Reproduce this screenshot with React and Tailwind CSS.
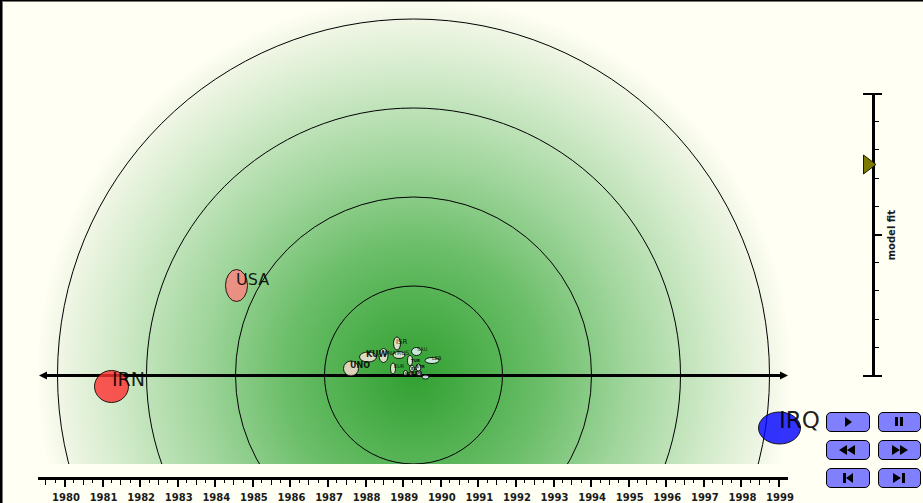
import { useState } from "react";

const RINGS = [89, 178, 267, 356];
const FIRST_YEAR = 1980;
const YEARS = Array.from({ length: 20 }, (_, i) => FIRST_YEAR + i);
const QUARTERS = Array.from({ length: 80 }, (_, i) => i - 2);

const yearX = (year) => 65 + (year - FIRST_YEAR) * 37.58;

const ACTORS = [
  { id: "iraq", label: "IRQ", cx: 779.5, cy: 428, rx: 21, ry: 16, fill: "#0000ff", size: 23, x: 779, y: 428 },
  { id: "iran", label: "IRN", cx: 111.5, cy: 386.5, rx: 17, ry: 16, fill: "#ff3030", size: 19, x: 112, y: 386 },
  { id: "usa", label: "USA", cx: 236.5, cy: 285.5, rx: 11, ry: 16, fill: "#ff8080", size: 16, x: 236, y: 285 },
  { id: "uno", label: "UNO", cx: 351, cy: 368.5, rx: 7.5, ry: 7.5, fill: "#ffdcd6", size: 8, bold: true, x: 350, y: 368 },
  { id: "kuwait", label: "KUW", cx: 368, cy: 357, rx: 8.5, ry: 5, fill: "#ffeae2", size: 8, bold: true, x: 366, y: 357 },
  { id: "una", label: "UNA", cx: 383.5, cy: 355.5, rx: 4.5, ry: 7, fill: "#fff0e8", size: 6, x: 383, y: 355 },
  { id: "israel", label: "ISR", cx: 397, cy: 343.5, rx: 3.5, ry: 6.5, fill: "#fff0e8", size: 7, x: 396, y: 344 },
  { id: "russia", label: "RUS", cx: 399, cy: 355, rx: 6, ry: 3.5, fill: "#fff4ee", size: 6, x: 397, y: 355 },
  { id: "europe", label: "EUR", cx: 393, cy: 368.5, rx: 2.5, ry: 5.5, fill: "#fff4ee", size: 5, x: 394, y: 368 },
  { id: "saudi", label: "SAU", cx: 416.5, cy: 351.5, rx: 5, ry: 4, fill: "#eafaff", size: 5, x: 417, y: 351 },
  { id: "lebanon", label: "LEB", cx: 432, cy: 360.5, rx: 7, ry: 3, fill: "#eafaff", size: 5, x: 432, y: 360 },
  { id: "turkey", label: "TUR", cx: 410, cy: 360.5, rx: 2.5, ry: 5, fill: "#fff4ee", size: 4, bold: true, x: 411, y: 362 },
  { id: "syria", label: "SYR", cx: 418.5, cy: 367.5, rx: 2.5, ry: 3.5, fill: "#ffffff", size: 4, bold: true, x: 416, y: 368 },
  { id: "egypt", label: "EGY", cx: 412, cy: 368.5, rx: 2.5, ry: 3, fill: "#ffffff", size: 4, bold: true, x: 411, y: 370 },
  { id: "jordan", label: "JOR", cx: 405.5, cy: 373, rx: 2, ry: 2.5, fill: "#ffffff", size: 4, bold: true, x: 405, y: 375 },
  { id: "france", label: "FRN", cx: 419, cy: 373, rx: 2.5, ry: 2.5, fill: "#ffffff", size: 4, bold: true, x: 412, y: 374 },
  { id: "britain", label: "UK", cx: 411, cy: 373.5, rx: 2, ry: 2, fill: "#ffffff", size: 4, bold: true, x: 411, y: 377 },
  { id: "china", label: "", cx: 425.5, cy: 377, rx: 3.5, ry: 2, fill: "#eafaff", size: 4, x: 425, y: 377 },
];

function ConflictMap() {
  return (
    <svg
      viewBox="3 2 823 501"
      className="block h-auto w-full font-['DejaVu_Sans','Open_Sans',sans-serif]"
      role="img"
      aria-label="Actor positions, 1980 to 1999"
    >
      <defs>
        <radialGradient id="glow" gradientUnits="userSpaceOnUse" cx="414" cy="375" r="378">
          <stop offset="0" stopColor="#32a032" />
          <stop offset="0.16" stopColor="#4bae4a" />
          <stop offset="0.34" stopColor="#6bbe69" />
          <stop offset="0.56" stopColor="#9fd59b" />
          <stop offset="0.8" stopColor="#d3ebcb" />
          <stop offset="0.94" stopColor="#f0f6e5" />
          <stop offset="1" stopColor="#fffff3" />
        </radialGradient>
        <clipPath id="field">
          <rect x="38" y="2" width="752" height="462" />
        </clipPath>
      </defs>

      <g clipPath="url(#field)">
        <circle cx="414" cy="375" r="378" fill="url(#glow)" />
        {RINGS.map((r) => (
          <circle key={r} cx="413.5" cy="375" r={r} fill="none" stroke="#000" strokeWidth="1" />
        ))}
      </g>

      <path d="M44 375.5H783" stroke="#000" strokeWidth="3" />
      <path d="M39 375.5L47 371.5V379.5ZM788 375.5L780 371.5V379.5Z" />

      {[...ACTORS].reverse().map((a) => (
        <g key={a.id}>
          <ellipse cx={a.cx} cy={a.cy} rx={a.rx} ry={a.ry} fill={a.fill} fillOpacity="0.8" stroke="#000" strokeOpacity="0.85" />
          <text x={a.x} y={a.y} fontSize={a.size} fontWeight={a.bold ? 700 : 400} fillOpacity="0.88">
            {a.label}
          </text>
        </g>
      ))}

      <path d="M38 478.5H788" stroke="#000" strokeWidth="3" />
      {QUARTERS.map((q) => {
        const x = Math.round(yearX(FIRST_YEAR + q / 4));
        if (x > 786) return null;
        const major = q % 4 === 0;
        const end = major ? 487 : q % 2 === 0 ? 485 : 483;
        return (
          <path key={q} d={`M${major ? x : x - 0.5} 479V${end}`} stroke="#000" strokeWidth={major ? 2 : 1} />
        );
      })}
      {YEARS.map((year) => (
        <text key={year} x={yearX(year) + 1} y="501" fontSize="10" fontWeight="700" textAnchor="middle" fill="#1a1a1a">
          {year}
        </text>
      ))}
    </svg>
  );
}

function FitScale() {
  const [fit, setFit] = useState(75);
  const y = 12 + (1 - fit / 100) * 282;
  return (
    <div className="flex items-center pl-9">
      <div className="relative">
        <svg width="22" height="306" viewBox="0 0 22 306" className="block" aria-hidden="true">
          <path d="M11.5 12V294" stroke="#000" strokeWidth="3" />
          <path d="M1 12H20M1 294H20M12 153H20" stroke="#000" strokeWidth="2" />
          {[1, 2, 3, 4, 6, 7, 8, 9].map((n) => (
            <path key={n} d={`M12 ${Math.round(12 + n * 28.2) - 0.5}H17`} stroke="#000" />
          ))}
          <path d={`M1.5 ${y - 9.5}V${y + 9.5}L14 ${y}Z`} fill="#7d7a00" stroke="#1a1a00" />
        </svg>
        <input
          id="fit"
          type="range"
          min="0"
          max="100"
          value={fit}
          onChange={(e) => setFit(Number(e.target.value))}
          className="absolute inset-0 h-full w-full cursor-pointer opacity-0 [direction:rtl] [writing-mode:vertical-lr]"
        />
      </div>
      <label
        htmlFor="fit"
        className="rotate-180 font-['DejaVu_Sans','Open_Sans',sans-serif] text-[10px] leading-4 font-bold text-[#1a1a1a] [writing-mode:vertical-rl]"
      >
        model fit
      </label>
    </div>
  );
}

const CONTROLS = [
  { name: "Play", d: "M18 5L25 10L18 15Z" },
  { name: "Pause", d: "M17 5H20V14H17ZM22 5H25V14H22Z" },
  { name: "Rewind", d: "M20 5V15L12 10ZM28 5V15L20 10Z" },
  { name: "Fast forward", d: "M14 5V15L22 10ZM22 5V15L30 10Z" },
  { name: "First", d: "M16 5H19V15H16ZM26 5V15L19 10Z" },
  { name: "Last", d: "M15 5V15L23 10ZM24 5H27V15H24Z" },
];

function Transport() {
  return (
    <div className="grid grid-cols-2 gap-2 pr-0.5">
      {CONTROLS.map((c) => (
        <button
          key={c.name}
          type="button"
          aria-label={c.name}
          className="flex h-5 cursor-pointer items-center justify-center rounded-[5px] border border-black bg-[#8080ff] hover:bg-[#9999ff]"
        >
          <svg width="42" height="20" viewBox="0 0 42 20" className="shrink-0" aria-hidden="true">
            <path d={c.d} />
          </svg>
        </button>
      ))}
    </div>
  );
}

export default function App() {
  return (
    <div className="min-h-screen border-t border-l-2 border-black bg-[#fffff3]">
      <main className="flex border-t border-l border-[#77776f]">
        <div className="min-w-0 flex-1">
          <ConflictMap />
        </div>
        <aside className="flex w-[97px] shrink-0 flex-col justify-between pt-20 pb-[15px]">
          <FitScale />
          <Transport />
        </aside>
      </main>
    </div>
  );
}
